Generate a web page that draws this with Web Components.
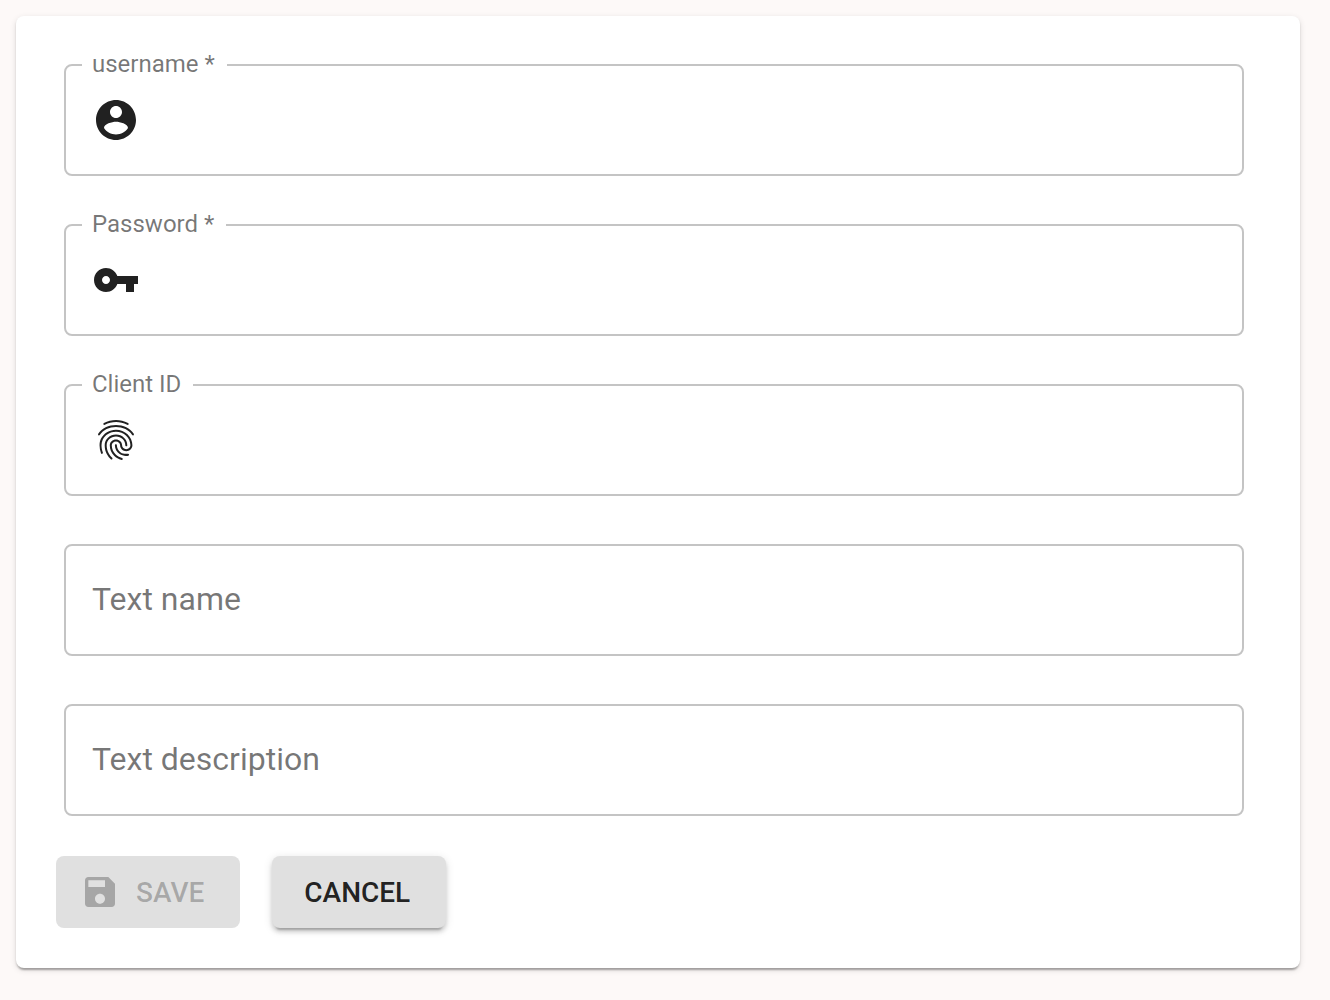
<!DOCTYPE html>
<html lang="en">
<head>
<meta charset="utf-8">
<title>Credentials</title>
<style>
  * { box-sizing: border-box; }
  body {
    margin: 0;
    padding: 16px 30px 32px 16px;
    background: #fdf9f8;
    color: rgba(0, 0, 0, 0.87);
    font-family: Roboto, "Liberation Sans", sans-serif;
  }
</style>
</head>
<body>
<form-card>
  <outlined-field label="username" required float>
    <svg-icon name="account"></svg-icon>
  </outlined-field>
  <outlined-field label="Password" type="password" required float>
    <svg-icon name="key"></svg-icon>
  </outlined-field>
  <outlined-field label="Client ID" float>
    <svg-icon name="fingerprint"></svg-icon>
  </outlined-field>
  <outlined-field label="Text name"></outlined-field>
  <outlined-field label="Text description"></outlined-field>
  <action-button slot="actions" disabled><svg-icon slot="icon" name="save"></svg-icon>SAVE</action-button>
  <action-button slot="actions">CANCEL</action-button>
</form-card>

<script>
const ICONS = {
  account: 'M12 2C6.48 2 2 6.48 2 12s4.48 10 10 10 10-4.48 10-10S17.52 2 12 2zm0 3c1.66 0 3 1.34 3 3s-1.34 3-3 3-3-1.34-3-3 1.34-3 3-3zm0 14.2c-2.5 0-4.71-1.28-6-3.22.03-1.99 4-3.08 6-3.08 1.99 0 5.97 1.09 6 3.08-1.29 1.94-3.5 3.22-6 3.22z',
  key: 'M12.65 10C11.83 7.67 9.61 6 7 6c-3.31 0-6 2.69-6 6s2.69 6 6 6c2.61 0 4.83-1.67 5.65-4H17v4h4v-4h2v-4H12.65zM7 14c-1.1 0-2-.9-2-2s.9-2 2-2 2 .9 2 2-.9 2-2 2z',
  fingerprint: 'M17.81 4.47c-.08 0-.16-.02-.23-.06C15.66 3.42 14 3 12.01 3c-1.98 0-3.86.47-5.57 1.41-.24.13-.54.04-.68-.2-.13-.24-.04-.55.2-.68C7.82 2.52 9.86 2 12.01 2c2.13 0 3.99.47 6.03 1.52.25.13.34.43.21.67-.09.18-.26.28-.44.28zM3.5 9.72c-.1 0-.2-.03-.29-.09-.23-.16-.28-.47-.12-.7.99-1.4 2.25-2.5 3.75-3.27C9.98 4.04 14 4.03 17.15 5.65c1.5.77 2.76 1.86 3.75 3.25.16.22.11.54-.12.7-.23.16-.54.11-.7-.12-.9-1.26-2.04-2.25-3.39-2.94-2.87-1.47-6.54-1.47-9.4.01-1.36.7-2.5 1.7-3.4 2.96-.08.14-.23.21-.39.21zm6.25 12.07c-.13 0-.26-.05-.35-.15-.87-.87-1.34-1.43-2.01-2.64-.69-1.23-1.05-2.73-1.05-4.34 0-2.97 2.54-5.39 5.66-5.39s5.66 2.42 5.66 5.39c0 .28-.22.5-.5.5s-.5-.22-.5-.5c0-2.42-2.09-4.39-4.66-4.39-2.57 0-4.66 1.97-4.66 4.39 0 1.44.32 2.77.93 3.85.64 1.15 1.08 1.64 1.85 2.42.19.2.19.51 0 .71-.11.1-.24.15-.37.15zm7.17-1.85c-1.19 0-2.24-.3-3.1-.89-1.49-1.01-2.38-2.65-2.38-4.39 0-.28.22-.5.5-.5s.5.22.5.5c0 1.41.72 2.74 1.94 3.56.71.48 1.54.71 2.54.71.24 0 .64-.03 1.04-.1.27-.05.53.13.58.41.05.27-.13.53-.41.58-.57.11-1.07.12-1.21.12zM14.91 22c-.04 0-.09-.01-.13-.02-1.59-.44-2.63-1.03-3.72-2.1-1.4-1.39-2.17-3.24-2.17-5.22 0-1.62 1.38-2.94 3.08-2.94 1.7 0 3.08 1.32 3.08 2.94 0 1.07.93 1.94 2.08 1.94s2.08-.87 2.08-1.94c0-3.77-3.25-6.83-7.25-6.83-2.84 0-5.44 1.58-6.61 4.03-.39.81-.59 1.76-.59 2.8 0 .78.07 2.01.67 3.61.1.26-.03.55-.29.64-.26.1-.55-.04-.64-.29-.49-1.31-.73-2.61-.73-3.96 0-1.2.23-2.29.68-3.24 1.33-2.79 4.28-4.6 7.51-4.6 4.55 0 8.25 3.51 8.25 7.83 0 1.62-1.38 2.94-3.08 2.94s-3.08-1.32-3.08-2.94c0-1.07-.93-1.94-2.08-1.94s-2.08.87-2.08 1.94c0 1.71.66 3.31 1.87 4.51.95.94 1.86 1.46 3.27 1.85.27.07.42.35.35.61-.05.23-.26.38-.47.38z',
  save: 'M17 3H5c-1.11 0-2 .9-2 2v14c0 1.1.89 2 2 2h14c1.1 0 2-.9 2-2V7l-4-4zm-5 16c-1.66 0-3-1.34-3-3s1.34-3 3-3 3 1.34 3 3-1.34 3-3 3zm3-10H5V5h10v4z'
};

customElements.define('svg-icon', class extends HTMLElement {
  connectedCallback() {
    if (this.shadowRoot) return;
    this.attachShadow({ mode: 'open' }).innerHTML = `
      <style>
        :host { display: block; flex: none; width: var(--icon-size, 48px); height: var(--icon-size, 48px); }
        svg { display: block; width: 100%; height: 100%; fill: currentColor; }
      </style>
      <svg viewBox="0 0 24 24" aria-hidden="true"><path d="${ICONS[this.getAttribute('name')]}"/></svg>`;
  }
});

customElements.define('outlined-field', class extends HTMLElement {
  connectedCallback() {
    if (this.shadowRoot) return;
    const required = this.hasAttribute('required');
    const floating = this.hasAttribute('float');
    const text = this.getAttribute('label') + (required ? ' *' : '');
    const label = `<label for="control">${text}</label>`;
    this.attachShadow({ mode: 'open' }).innerHTML = `
      <style>
        * { box-sizing: border-box; }
        :host { display: block; }
        fieldset {
          min-width: 0; margin: 0; padding: 0;
          border: 2px solid rgba(0, 0, 0, 0.23);
          border-radius: 8px;
        }
        fieldset:focus-within { border-color: #1976d2; }
        legend {
          height: 2px; margin-left: 16px; padding: 0 12px 0 10px;
          font-size: 24px; line-height: 0;
        }
        label { color: rgba(0, 0, 0, 0.54); white-space: nowrap; }
        .row { display: grid; grid-template-columns: auto 1fr; align-items: center; height: 108px; padding: 0 26px; }
        input {
          grid-area: 1 / 2; width: 100%; height: 48px; padding: 0; border: 0; outline: 0;
          background: none; color: inherit; font: inherit; font-size: 32px;
        }
        .row label { grid-area: 1 / 2; padding-bottom: 2px; font-size: 32px; line-height: 38px; }
        .filled label { visibility: hidden; }
      </style>
      <fieldset>
        ${floating ? `<legend>${label}</legend>` : ''}
        <div class="row">
          <slot></slot>
          ${floating ? '' : label}
          <input id="control" type="${this.getAttribute('type') || 'text'}" ${required ? 'required' : ''}>
        </div>
      </fieldset>`;
    const row = this.shadowRoot.querySelector('.row');
    row.querySelector('input').addEventListener('input', e => row.classList.toggle('filled', e.target.value !== ''));
  }
});

customElements.define('action-button', class extends HTMLElement {
  connectedCallback() {
    if (this.shadowRoot) return;
    this.attachShadow({ mode: 'open' }).innerHTML = `
      <style>
        :host { display: block; --icon-size: 40px; }
        button {
          display: flex; align-items: center; justify-content: center;
          height: 72px; padding: 0 36px 0 32px; border: 0; border-radius: 8px;
          background: #e0e0e0; color: rgba(0, 0, 0, 0.87);
          font: 500 28px/48px Roboto, "Liberation Sans", sans-serif;
          box-shadow: 0 6px 2px -4px rgba(0,0,0,.2), 0 4px 4px rgba(0,0,0,.14), 0 2px 10px rgba(0,0,0,.12);
          cursor: pointer;
        }
        button:disabled { color: rgba(0, 0, 0, 0.26); box-shadow: none; cursor: default; }
        span { padding-top: 2px; }
        ::slotted(svg-icon) { margin: 0 16px 0 -8px; }
      </style>
      <button type="button" ${this.hasAttribute('disabled') ? 'disabled' : ''}><slot name="icon"></slot><span><slot></slot></span></button>`;
  }
});

customElements.define('form-card', class extends HTMLElement {
  connectedCallback() {
    if (this.shadowRoot) return;
    this.attachShadow({ mode: 'open' }).innerHTML = `
      <style>
        :host {
          display: block; padding: 40px; background: #fff; border-radius: 8px;
          box-shadow: 0 4px 2px -2px rgba(0,0,0,.2), 0 2px 2px rgba(0,0,0,.14), 0 2px 6px rgba(0,0,0,.12);
        }
        form { display: flex; flex-direction: column; gap: 32px; }
        .fields { display: flex; flex-direction: column; gap: 48px; padding: 8px 16px 8px 8px; }
        .actions { display: flex; gap: 32px; }
      </style>
      <form>
        <div class="fields"><slot></slot></div>
        <div class="actions"><slot name="actions"></slot></div>
      </form>`;
  }
});
</script>
</body>
</html>
